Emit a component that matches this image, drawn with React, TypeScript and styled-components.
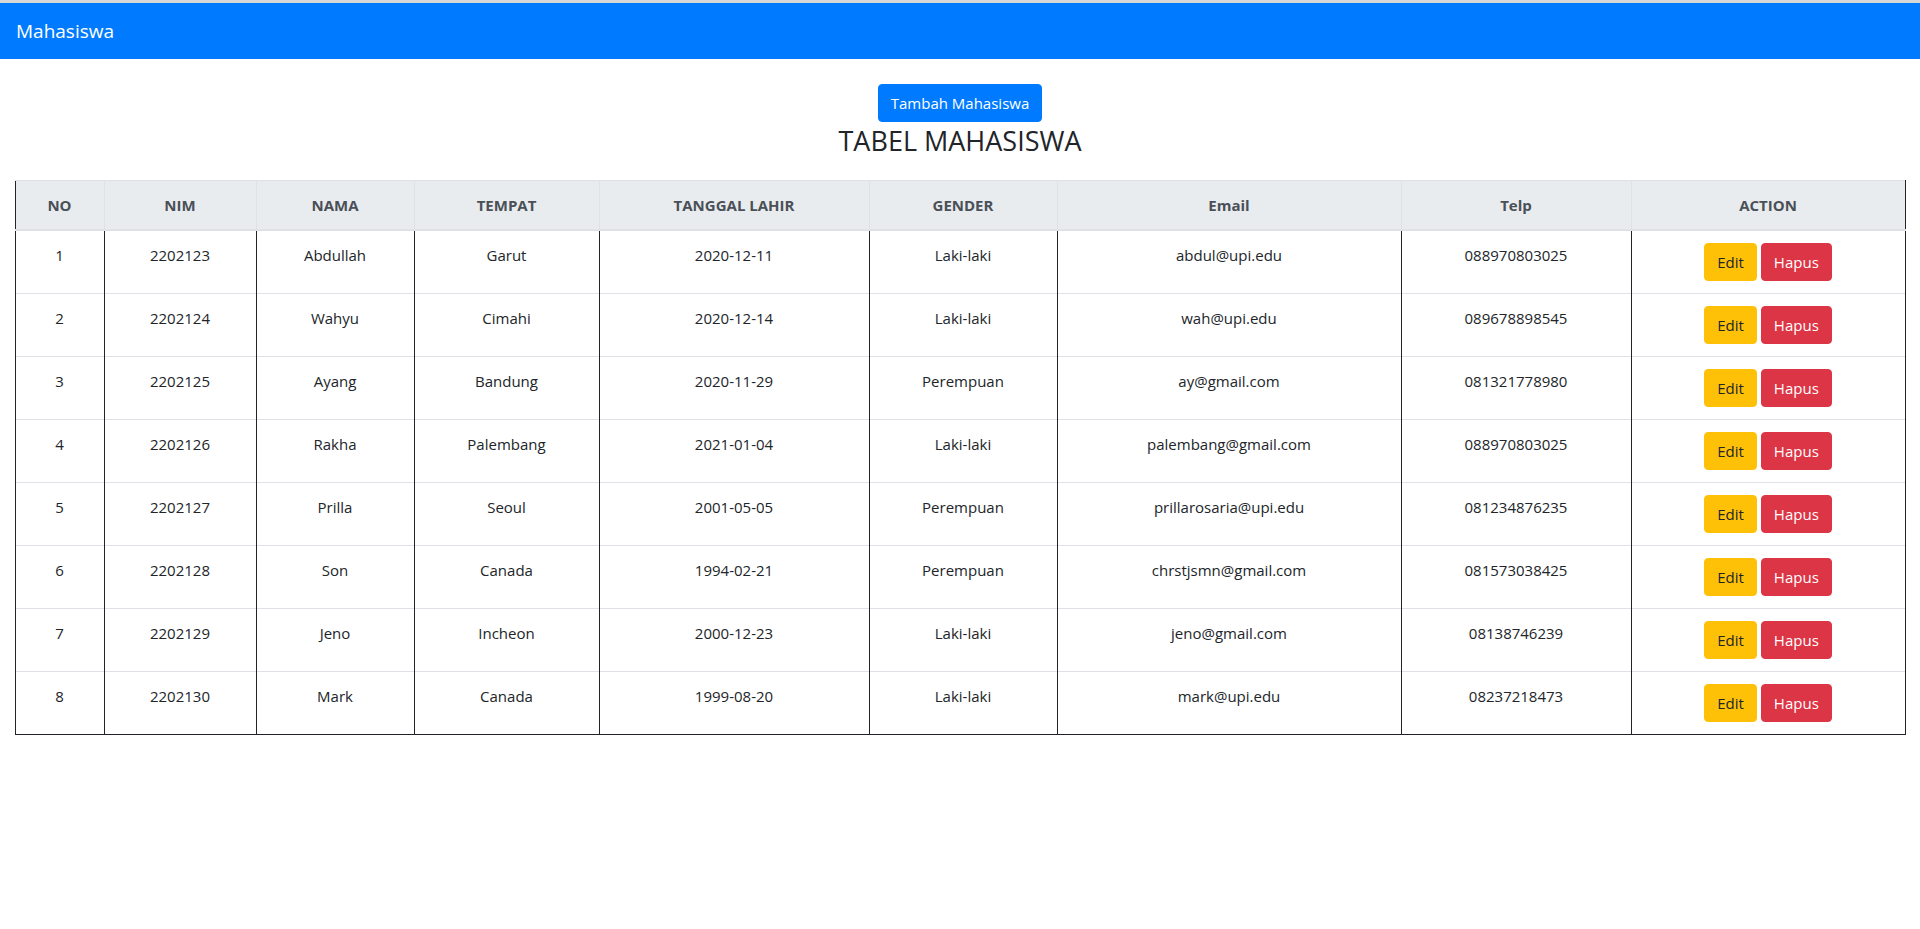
import React from 'react';
import styled, { createGlobalStyle } from 'styled-components';

type Mahasiswa = {
  no: number;
  nim: string;
  nama: string;
  tempat: string;
  tanggal: string;
  gender: string;
  email: string;
  telp: string;
};

const data: Mahasiswa[] = [
  { no: 1, nim: '2202123', nama: 'Abdullah', tempat: 'Garut', tanggal: '2020-12-11', gender: 'Laki-laki', email: 'abdul@upi.edu', telp: '088970803025' },
  { no: 2, nim: '2202124', nama: 'Wahyu', tempat: 'Cimahi', tanggal: '2020-12-14', gender: 'Laki-laki', email: 'wah@upi.edu', telp: '089678898545' },
  { no: 3, nim: '2202125', nama: 'Ayang', tempat: 'Bandung', tanggal: '2020-11-29', gender: 'Perempuan', email: 'ay@gmail.com', telp: '081321778980' },
  { no: 4, nim: '2202126', nama: 'Rakha', tempat: 'Palembang', tanggal: '2021-01-04', gender: 'Laki-laki', email: 'palembang@gmail.com', telp: '088970803025' },
  { no: 5, nim: '2202127', nama: 'Prilla', tempat: 'Seoul', tanggal: '2001-05-05', gender: 'Perempuan', email: 'prillarosaria@upi.edu', telp: '081234876235' },
  { no: 6, nim: '2202128', nama: 'Son', tempat: 'Canada', tanggal: '1994-02-21', gender: 'Perempuan', email: 'chrstjsmn@gmail.com', telp: '081573038425' },
  { no: 7, nim: '2202129', nama: 'Jeno', tempat: 'Incheon', tanggal: '2000-12-23', gender: 'Laki-laki', email: 'jeno@gmail.com', telp: '08138746239' },
  { no: 8, nim: '2202130', nama: 'Mark', tempat: 'Canada', tanggal: '1999-08-20', gender: 'Laki-laki', email: 'mark@upi.edu', telp: '08237218473' },
];

const columns = [
  { label: 'NO', width: 89 },
  { label: 'NIM', width: 152 },
  { label: 'NAMA', width: 158 },
  { label: 'TEMPAT', width: 185 },
  { label: 'TANGGAL LAHIR', width: 270 },
  { label: 'GENDER', width: 188 },
  { label: 'Email', width: 344 },
  { label: 'Telp', width: 230 },
  { label: 'ACTION', width: 274 },
];

const GlobalStyle = createGlobalStyle`
  html, body {
    margin: 0;
    padding: 0;
    background: #fff;
  }
  body {
    font-family: 'Open Sans', 'Noto Sans', sans-serif;
    font-size: 16px;
    line-height: 1.5;
    color: #212529;
    border-top: 3px solid #d6d6d6;
  }
  * {
    box-sizing: border-box;
  }
`;

const Navbar = styled.nav`
  height: 56px;
  background: #007bff;
  display: flex;
  align-items: center;
  padding: 0 16px;
`;

const Brand = styled.span`
  color: #fff;
  font-size: 19px;
  line-height: 30px;
`;

const Main = styled.main`
  padding: 0 15px;
  display: flex;
  flex-direction: column;
  align-items: center;
`;

const Button = styled.button<{ $variant: 'primary' | 'warning' | 'danger' }>`
  font-family: inherit;
  font-size: 15px;
  line-height: 24px;
  padding: 6px 12px;
  border-radius: 4px;
  border: 1px solid transparent;
  cursor: pointer;
  background: ${(p) =>
    p.$variant === 'primary' ? '#007bff' : p.$variant === 'warning' ? '#ffc107' : '#dc3545'};
  border-color: ${(p) =>
    p.$variant === 'primary' ? '#007bff' : p.$variant === 'warning' ? '#ffc107' : '#dc3545'};
  color: ${(p) => (p.$variant === 'warning' ? '#212529' : '#fff')};
`;

const AddButton = styled(Button)`
  margin-top: 25px;
`;

const Title = styled.h2`
  margin: 0;
  font-size: 27px;
  font-weight: 400;
  line-height: 38px;
`;

const Table = styled.table`
  width: 100%;
  margin-top: 20px;
  border-collapse: collapse;
  table-layout: fixed;
`;

const Th = styled.th`
  background: #e9ecef;
  color: #495057;
  font-weight: 700;
  font-size: 15px;
  text-align: center;
  vertical-align: bottom;
  padding: 12px;
  line-height: 24px;
  border: 1px solid #dee2e6;
  border-bottom: 2px solid #dee2e6;

  &:first-child {
    border-left: 1px solid #212529;
  }
  &:last-child {
    border-right: 1px solid #212529;
  }
`;

const Tr = styled.tr`
  &:last-child td {
    border-bottom: 1px solid #212529;
  }
`;

const Td = styled.td`
  padding: 12px;
  text-align: center;
  vertical-align: top;
  font-size: 15px;
  line-height: 24px;
  border-top: 1px solid #dee2e6;
  border-left: 1px solid #212529;
  border-right: 1px solid #212529;
  height: 62px;
`;

const Actions = styled.div`
  display: flex;
  justify-content: center;
  gap: 4px;
`;

export default function App() {
  return (
    <>
      <GlobalStyle />
      <Navbar>
        <Brand>Mahasiswa</Brand>
      </Navbar>
      <Main>
        <AddButton $variant="primary">Tambah Mahasiswa</AddButton>
        <Title>TABEL MAHASISWA</Title>
        <Table>
          <colgroup>
            {columns.map((c) => (
              <col key={c.label} style={{ width: c.width }} />
            ))}
          </colgroup>
          <thead>
            <tr>
              {columns.map((c) => (
                <Th key={c.label}>{c.label}</Th>
              ))}
            </tr>
          </thead>
          <tbody>
            {data.map((m) => (
              <Tr key={m.no}>
                <Td>{m.no}</Td>
                <Td>{m.nim}</Td>
                <Td>{m.nama}</Td>
                <Td>{m.tempat}</Td>
                <Td>{m.tanggal}</Td>
                <Td>{m.gender}</Td>
                <Td>{m.email}</Td>
                <Td>{m.telp}</Td>
                <Td>
                  <Actions>
                    <Button $variant="warning">Edit</Button>
                    <Button $variant="danger">Hapus</Button>
                  </Actions>
                </Td>
              </Tr>
            ))}
          </tbody>
        </Table>
      </Main>
    </>
  );
}
